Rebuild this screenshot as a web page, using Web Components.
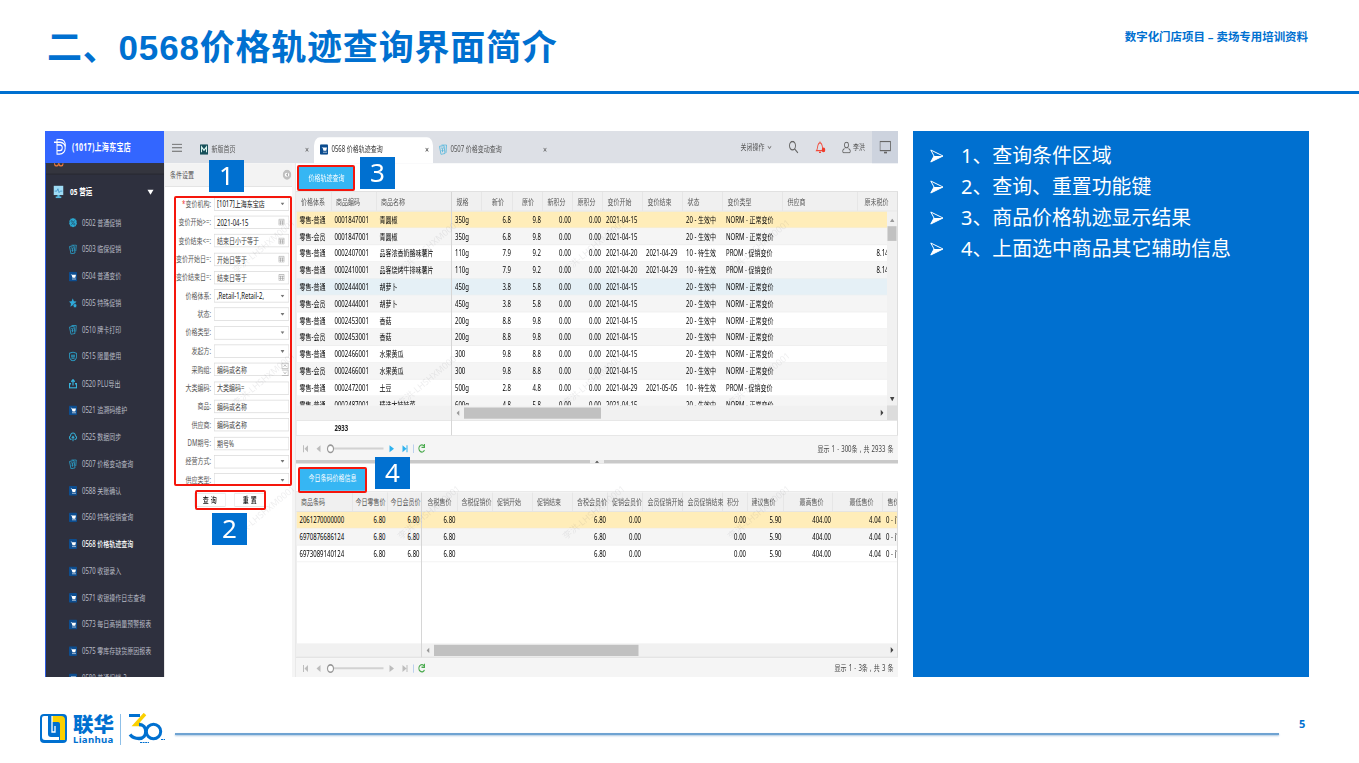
<!DOCTYPE html>
<html lang="zh-CN">
<head>
<meta charset="utf-8">
<title>0568价格轨迹查询界面简介</title>
<style>
body{margin:0;width:1359px;height:763px;overflow:hidden;background:#fff;font-family:"Noto Sans","Noto Sans CJK SC",sans-serif}
</style>
</head>
<body>
<slide-page>
  <slide-header slot="header">
    <span>二、0568价格轨迹查询界面简介</span>
    <span slot="note">数字化门店项目 – 卖场专用培训资料</span>
  </slide-header>
  <app-shot></app-shot>
  <note-list>
    <note-item>1、查询条件区域</note-item>
    <note-item>2、查询、重置功能键</note-item>
    <note-item>3、商品价格轨迹显示结果</note-item>
    <note-item>4、上面选中商品其它辅助信息</note-item>
  </note-list>
  <slide-footer slot="footer">5</slide-footer>
</slide-page>

<script>
const ICONS={
cart:`<rect width="16" height="16" rx="2" fill="#0d4d8f"/><path d="M3 4h2l1 1h8l-1.500 5H7L5 5" fill="#fff"/><circle cx="8" cy="12" r="1.200" fill="#fff"/><circle cx="12" cy="12" r="1.200" fill="#fff"/>`,
percent:`<path d="M8 0l2 1.400 2.500-.2.9 2.300L15.500 5 15 7.600l1 2.400-1.900 1.600-.7 2.400-2.500.2L8 16l-2.500-1.600-2.700-.2-.6-2.500L.2 10 1 7.600.5 5l2-1.500.9-2.300 2.600.2z" fill="#2ba7cf"/><path d="M11 4.500l-6 7" stroke="#20435c" stroke-width="1.300"/><circle cx="5.500" cy="5.800" r="1.400" fill="none" stroke="#20435c"/><circle cx="10.500" cy="10.300" r="1.400" fill="none" stroke="#20435c"/>`,
cards:`<g fill="none" stroke="#2b9cc4" stroke-width="1.600"><path d="M5 1h9.500l-1 10"/><path d="M1 3.500l9-1.500 2 12-8 1.500z"/><path d="M5 5l2 3 1.500-3.500M7 8v4M5 9.500h4"/></g>`,
star:`<path d="M7.500 0l2.200 4.800 5.300.5-4 3.600 1.200 5.100-4.700-2.600L2.800 14 4 8.900 0 5.300l5.200-.5z" fill="#2fa9d8"/><circle cx="12" cy="12" r="3.500" fill="#2fa9d8" stroke="#2e3040"/>`,
shield:`<g fill="none" stroke="#2b9cc4" stroke-width="1.700"><path d="M1 3l7-2 7 2v5c0 4-4 6.500-7 7.500C5 14.500 1 12 1 8z"/><path d="M4 6h8M4 8.500h8M5 11h6"/></g>`,
out:`<g fill="none" stroke="#38b4dc" stroke-width="2.300"><path d="M4 8H1v7h14V8h-3M8 11V2M4.500 5L8 1.500 11.500 5"/></g>`,
cloud:`<g fill="none" stroke="#35a9d0" stroke-width="2"><path d="M5 12H3.500C0 11 0 7 3 6.500 3.500 0 12.500 0 13 6.500c3 .5 3 4.500-.5 5.500H11M8 15V7M5.500 9.500L8 7l2.500 2.500"/></g>`,
monitor:`<rect width="18" height="12" fill="#9fdcf5"/><path d="M2 7h4l2-3 2 5 2-2h4" fill="none" stroke="#2b82bd"/><path d="M7 12h4v2h3v2H4v-2h3z" fill="#56b9df"/>`,
home:`<rect width="16" height="16" rx="1" fill="#17505a"/><path d="M3 12V4l5 5 5-5v8" fill="none" stroke="#d8f4ee" stroke-width="2"/>`,
cardsLight:`<g fill="none" stroke="#56b7dc" stroke-width="1.500"><path d="M5 1h10l-1 12"/><path d="M1 3l9-1 2 12-8 1.500z"/><path d="M5 5l2 3 1.500-3.500M7 8v4M5 9.500h4"/></g>`
};

class PlainIcon extends HTMLElement{
constructor(){
  super();
  this.attachShadow({mode:'open'});
}
connectedCallback(){
  const name=this.getAttribute('name');
  const box=name==='monitor'?'0 0 18 16':'0 0 16 16';
  this.shadowRoot.innerHTML=`
<style>
:host{display:block;width:16px;height:14px;flex:none}
svg{display:block;width:100%;height:100%}
</style>
<svg viewBox="${box}" preserveAspectRatio="none">${ICONS[name]}</svg>`;
}
}
customElements.define('plain-icon',PlainIcon);

class SlidePage extends HTMLElement{
constructor(){
  super();
  this.attachShadow({mode:'open'}).innerHTML=`
<style>
:host{display:flex;flex-direction:column;width:1359px;height:763px}
main{display:grid;grid-template-columns:853px 396px;column-gap:15px;height:546px;padding:37px 0 0 45px}
</style>
<slot name="header"></slot>
<main><slot></slot></main>
<slot name="footer"></slot>`;
}
}
customElements.define('slide-page',SlidePage);

class SlideHeader extends HTMLElement{
constructor(){
  super();
  this.attachShadow({mode:'open'}).innerHTML=`
<style>
:host{display:flex;justify-content:space-between;box-sizing:border-box;height:94px;border-bottom:3px solid #0070d0;color:#0070d0;font-weight:700;white-space:nowrap}
h1{margin:0;padding:21px 0 0 47px;font:700 35px/54px "Liberation Sans","Noto Sans CJK SC",sans-serif;letter-spacing:.8px}
p{margin:0;padding:28px 51px 0 0;font-size:11.450px;line-height:18px}
</style>
<h1><slot></slot></h1>
<p><slot name="note"></slot></p>`;
}
}
customElements.define('slide-header',SlideHeader);

class NoteList extends HTMLElement{
constructor(){
  super();
  this.attachShadow({mode:'open'}).innerHTML=`
<style>
:host{display:flex;flex-direction:column;box-sizing:border-box;padding:9px 0 0 17px;background:#0070d0;color:#fff}
</style>
<slot></slot>`;
}
}
customElements.define('note-list',NoteList);

class NoteItem extends HTMLElement{
constructor(){
  super();
  this.attachShadow({mode:'open'}).innerHTML=`
<style>
:host{display:flex;align-items:center;gap:17px;height:31px;font-size:19.900px;line-height:31px;white-space:nowrap}
svg{width:14px;height:14px;flex:none}
</style>
<svg viewBox="0 0 14 14"><path d="M.8 1L13 7 .8 13 4 7z" fill="none" stroke="#fff"/><path d="M4 7h9L.8 13z" fill="#fff"/></svg>
<span><slot></slot></span>`;
}
}
customElements.define('note-item',NoteItem);

class SlideFooter extends HTMLElement{
constructor(){
  super();
  this.attachShadow({mode:'open'}).innerHTML=`
<style>
:host{display:flex;align-items:flex-start;padding:36px 0 0 40px;color:#0070d0}
svg{display:block;flex:none}
.brand{display:flex;flex-direction:column;width:41px;margin-left:6px;white-space:nowrap}
.brand b{font:900 20.500px/21px "Noto Sans CJK SC",sans-serif}
.brand i{font:700 9.600px/11px "Noto Sans",sans-serif;letter-spacing:.3px}
.bar{width:1px;height:31px;margin:1px 7px 0 6px;background:#8fc0e8}
.line{width:1104px;height:2px;margin:20px 0 0 9px;background:#6fa3d2;box-shadow:0 1px 2px #aac6e0}
.page{margin-left:20px;font-size:11px;font-weight:700;line-height:20px;padding-top:1px}
</style>
<svg width="27" height="31" viewBox="0 0 27 31">
  <rect y="1" width="27" height="29" rx="4" fill="#0070d0"/>
  <path d="M2 5q0-2 2-2h4v18q0 3 3 3h8v3H5q-3 0-3-3z" fill="#fff"/>
  <path d="M12 3h9q4 0 4 4v20h-5V11q0-2-2-2h-6z" fill="#fbd000"/>
  <path d="M12 3v16h3v-6" fill="none" stroke="#fff" stroke-width="1.300"/>
</svg>
<div class="brand"><b>联华</b><i>Lianhua</i></div>
<div class="bar"></div>
<svg width="38" height="31" viewBox="0 0 38 31">
  <path d="M1 2.500h11" stroke="#0070d0" stroke-width="3"/>
  <path d="M17 1L7.500 11.500h6" fill="none" stroke="#fbd000" stroke-width="3.500"/>
  <path d="M11 11.500c9 0 9 14 0 14q-6 0-9-4" fill="none" stroke="#0070d0" stroke-width="3.300"/>
  <circle cx="25.500" cy="18.500" r="7.200" fill="none" stroke="#0070d0" stroke-width="3"/>
  <path d="M12 29.500h9M33 26.500h4" stroke="#0070d0" stroke-dasharray="2 .6"/>
</svg>
<div class="line"></div>
<div class="page"><slot></slot></div>`;
}
}
customElements.define('slide-footer',SlideFooter);

class MenuItem extends HTMLElement{
constructor(){
  super();
  this.attachShadow({mode:'open'});
}
connectedCallback(){
  this.shadowRoot.innerHTML=`
<style>
:host{display:flex;align-items:center;gap:10px;height:38.270px;padding-left:46px;color:#b9bcc6;font-size:12px;white-space:nowrap;flex:none}
:host([active]){color:#fff;font-weight:500}
</style>
<plain-icon name="${this.getAttribute('icon')}"></plain-icon>
<span><slot></slot></span>`;
}
}
customElements.define('menu-item',MenuItem);

class SideMenu extends HTMLElement{
constructor(){
  super();
  const items=[['percent','0502 普通促销'],['cards','0503 临保促销'],['cart','0504 普通变价'],['star','0505 特殊促销'],
    ['cards','0510 牌卡打印'],['shield','0515 限量使用'],['out','0520 PLU导出'],['cart','0521 追溯码维护'],['cloud','0525 数据同步'],
    ['cards','0507 价格变动查询'],['cart','0588 关账确认'],['cart','0560 特殊促销查询'],['cart','0568 价格轨迹查询'],['cart','0570 收银录入'],
    ['cart','0571 收银操作日志查询'],['cart','0573 每日高销量预警报表'],['cart','0575 零库存缺货原因报表'],['cart','0580 普通促销-2']];
  this.attachShadow({mode:'open'}).innerHTML=`
<style>
:host{display:flex;flex-direction:column;width:238px;height:780px;overflow:hidden;background:#2e303e}
header{display:flex;align-items:center;gap:11px;height:46px;padding-left:17px;background:#3366ff;color:#fff;font-size:14px;letter-spacing:.6px;font-weight:700;white-space:nowrap;flex:none}
header svg{width:26px;height:24px}
nav{display:flex;flex-direction:column;border-left:2px solid #2f5de0;flex:1;min-height:0}
.cut{height:15px;padding-left:16px;background:#34353e;border-bottom:1px solid #23242c;flex:none}
.cut svg{display:block;width:20px;height:5px}
.group{display:flex;align-items:center;height:50px;padding:0 21px 0 15px;color:#fff;font-size:13px;font-weight:700;flex:none}
.group plain-icon{width:20px;height:18px;margin-right:13px}
.group i{margin-left:auto;border:6px solid transparent;border-top:7px solid #fff;border-bottom:0}
</style>
<header>
  <svg viewBox="0 0 26 24" fill="none" stroke="#fff" stroke-width="2"><path d="M1 5h12c14 0 14 17-1 17H7V1h6c7 0 11 4 11 10"/><path d="M7 17h6c6 0 6-8 0-8H7"/></svg>
  <span>(1017)上海东宝店</span>
</header>
<nav>
  <div class="cut"><svg viewBox="0 0 20 5" fill="none" stroke="#e8783c" stroke-width="2"><circle cx="5" cy="0" r="4"/><circle cx="14" cy="0" r="4"/></svg></div>
  <div class="group"><plain-icon name="monitor"></plain-icon>05 营运<i></i></div>
  ${items.map(([icon,text],i)=>`<menu-item icon="${icon}"${i===12?' active':''}>${text}</menu-item>`).join('')}
</nav>`;
}
}
customElements.define('side-menu',SideMenu);

class TopBar extends HTMLElement{
constructor(){
  super();
  this.attachShadow({mode:'open'}).innerHTML=`
<style>
:host{display:flex;align-items:stretch;height:46px;background:#dde0e6;color:#555;font-size:12px;white-space:nowrap;flex:none}
svg{display:block;flex:none}
.burger{width:20px;height:12px;margin:18px 0 0 16px}
.tab{display:flex;align-items:center;box-sizing:border-box;padding:6px 12px 0 14px}
.tab span{margin-left:7px}
.tab em{margin-left:auto;font-style:normal;font-size:14px}
.home{width:244px;margin-left:22px}
.on{width:238px;margin:9px 0 0 -2px;padding:0 8px 3px 12px;background:#fff;border-radius:12px 12px 0 0;color:#333}
.tab plain-icon{height:15px}
.other{width:240px;padding-left:12px}
.tools{display:flex;align-items:center;margin-left:auto}
.tools .search{width:20px;height:18px;margin-left:34px}
.tools .bell{width:21px;height:19px;margin-left:34px}
.tools .user{width:18px;height:17px;margin:0 4px 0 32px}
.screen{display:flex;align-items:center;justify-content:center;width:52px;height:46px;margin-left:14px;background:#cdd3de}
.screen svg{width:23px;height:18px}
</style>
<svg class="burger" viewBox="0 0 20 12" stroke="#666" stroke-width="1.600"><path d="M0 1h20M0 6h20M0 11h20"/></svg>
<div class="tab home"><plain-icon name="home"></plain-icon><span>新版首页</span><em>×</em></div>
<div class="tab on"><plain-icon name="cart"></plain-icon><span>0568 价格轨迹查询</span><em>×</em></div>
<div class="tab other"><plain-icon name="cardsLight"></plain-icon><span>0507 价格变动查询</span><em>×</em></div>
<div class="tools">
  <span>关闭操作</span>
  <svg width="8" height="5" viewBox="0 0 8 5" style="margin-left:6px"><path d="M0 0l4 4 4-4" fill="none" stroke="#777" stroke-width="1.500"/></svg>
  <svg class="search" viewBox="0 0 20 18" fill="none" stroke="#666" stroke-width="1.900"><circle cx="8" cy="7" r="6"/><path d="M12 11.500l7 6"/></svg>
  <svg class="bell" viewBox="0 0 21 19" fill="none" stroke="#f04c3c" stroke-width="1.700"><path d="M2 14c3-2 1-11 7-11s4 9 7 11zM9 1v2M7 16.500h4"/><circle cx="16" cy="13" r="3.500" fill="#f03c2c" stroke="none"/></svg>
  <svg class="user" viewBox="0 0 18 17" fill="none" stroke="#666" stroke-width="1.600"><circle cx="9" cy="5" r="4"/><path d="M5 10c-5 2-4 5-2 6h12c2-1 3-4-2-6"/></svg>
  <span>李洪</span>
  <div class="screen"><svg viewBox="0 0 23 18" fill="none" stroke="#666" stroke-width="1.700"><rect x="1" y="1" width="21" height="13"/><path d="M9 17h6" stroke-width="3"/></svg></div>
</div>`;
}
}
customElements.define('top-bar',TopBar);

class FormField extends HTMLElement{
constructor(){
  super();
  this.attachShadow({mode:'open'});
}
connectedCallback(){
  const type=this.getAttribute('type');
  const marks={
    select:'<svg width="8" height="4" viewBox="0 0 8 4"><path d="M0 0h8L4 4z" fill="#777"/></svg>',
    date:'<svg width="12" height="10" viewBox="0 0 12 10" fill="none" stroke="#999"><path d="M.5 1h11v8.500H.5zM0 3.500h12M0 6.500h12M4 3v6M8 3v6"/></svg>',
    spin:'<svg class="spin" width="14" height="19" viewBox="0 0 14 19" fill="none" stroke="#999"><path d="M.5.5h13v8H.5zM.5 10.500h13v8H.5M4 6l3-3 3 3M4 13l3 3 3-3"/></svg>'
  };
  this.shadowRoot.innerHTML=`
<style>
:host{display:flex;align-items:center;height:26.300px;font-size:12px;white-space:nowrap;flex:none}
label{display:flex;justify-content:flex-end;width:92px;margin-right:6px;color:#555}
label i{color:#e33;font-style:normal}
div{display:flex;align-items:center;justify-content:space-between;box-sizing:border-box;width:150px;height:19px;padding:0 8px 0 5px;border:1px solid #d8d8d8;background:#fff;color:#444;line-height:17px}
.strong{color:#111}
.spin{margin-right:-8px}
</style>
<label>${this.hasAttribute('required')?'<i>*</i>':''}${this.getAttribute('label')}:</label>
<div class="${this.hasAttribute('strong')?'strong':''}"><slot></slot>${marks[type]||''}</div>`;
}
}
customElements.define('form-field',FormField);

class FilterPanel extends HTMLElement{
constructor(){
  super();
  this.attachShadow({mode:'open'}).innerHTML=`
<style>
:host{display:flex;flex-direction:column;box-sizing:border-box;width:256px;height:734px;background:#fff;border-left:2px solid #e8e8e8;font-size:12px}
header{display:flex;align-items:center;justify-content:space-between;box-sizing:border-box;height:34px;padding:0 1px 0 10px;background:#f3f3f3;border-bottom:1px solid #ddd;color:#555;flex:none}
.form{height:426px;padding-top:11px;box-sizing:border-box;overflow:hidden;flex:none}
.actions{display:flex;justify-content:center;gap:18px;margin:11px 0 0 6px}
.actions button{width:62px;height:20px;padding:0;border:1px solid #ddd;background:#fff;color:#111;font:500 12px/16px "Noto Sans CJK SC",sans-serif;letter-spacing:4px;text-indent:3px}
</style>
<header>条件设置<svg width="18" height="15" viewBox="0 0 18 15"><ellipse cx="9" cy="7.500" rx="6.500" ry="5" fill="#fff" stroke="#c0c0c0" stroke-width="4"/><path d="M11 4.500L7 7.500l4 3z" fill="#aaa"/></svg></header>
<div class="form">
  <form-field label="变价机构" type="select" required strong>[1017]上海东宝店</form-field>
  <form-field label="变价开始&gt;=" type="date" strong>2021-04-15</form-field>
  <form-field label="变价结束&lt;=" type="date">结束日小于等于</form-field>
  <form-field label="变价开始日=" type="date">开始日等于</form-field>
  <form-field label="变价结束日=" type="date">结束日等于</form-field>
  <form-field label="价格体系" type="select" strong>,Retail-1,Retail-2,</form-field>
  <form-field label="状态" type="select"><span></span></form-field>
  <form-field label="价格类型" type="select"><span></span></form-field>
  <form-field label="发起方" type="select"><span></span></form-field>
  <form-field label="采购组" type="spin">编码或名称</form-field>
  <form-field label="大类编码">大类编码=</form-field>
  <form-field label="商品">编码或名称</form-field>
  <form-field label="供应商">编码或名称</form-field>
  <form-field label="DM期号">期号%</form-field>
  <form-field label="经营方式" type="select"><span></span></form-field>
  <form-field label="供应类型" type="select"><span></span></form-field>
</div>
<div class="actions"><button>查询</button><button>重置</button></div>`;
}
}
customElements.define('filter-panel',FilterPanel);

class DataGrid extends HTMLElement{

constructor(){
  super();
  this._model=null;
  this.attachShadow({mode:'open'}).innerHTML=`
<style>
:host{display:flex;border-top:1px solid #d5d5d5;border-bottom:1px solid #d0d0d0;box-sizing:border-box;font-size:12px;white-space:nowrap;overflow:hidden;flex:none}
.part{display:flex;flex-direction:column;box-sizing:border-box;min-width:0}
.locked{border-right:2px solid #d6d6d6;border-left:1px solid #ddd;flex:none}
.rest{flex:1;border-right:2px solid #ddd}
.head,.row{display:grid;flex:none}
.head{height:28px;background:#f0f0f0;border-bottom:1px solid #ddd;color:#555;line-height:27px;box-sizing:border-box;overflow:hidden}
.head>div{padding-left:9px;border-right:1px solid #dcdcdc;box-sizing:border-box}
.view{display:flex;flex:none}
.rows{flex:1;min-width:0;overflow:hidden}
.row{height:24px;box-sizing:border-box;border-bottom:1px solid #ededed;line-height:23px;color:#000}
.row:nth-child(even){background:#f5f5f5}
.row.hover{background:#e5f0f6}
.row.selected{background:#ffedb9}
.row>div{padding:0 4px 0 6px;overflow:hidden}
.num{text-align:right}
.vbar{display:flex;flex-direction:column;align-items:center;width:20px;background:#f1f1f1;flex:none}
.vbar i{width:18px;height:21px;background:#c1c1c1;margin:6px 0 auto}
.hbar{display:flex;align-items:center;background:#f1f1f1;box-sizing:border-box;border-bottom:1px solid #e2e2e2;padding-left:9px;flex:none}
.hbar i{height:16px;background:#c1c1c1;margin:0 auto 0 9px}
.corner{width:20px;height:100%;margin-left:7px;background:#dcdcdc}
.foot{flex:1;padding-left:76px;font-weight:700;color:#222;line-height:20px}
svg{display:block;flex:none}
</style>
<div class="part locked"></div>
<div class="part rest"></div>`;
}

set model(model){
  this._model=model;
  this._render();
}

get model(){
  return this._model;
}

_render(){
  const m=this._model;
  const [locked,rest]=this.shadowRoot.querySelectorAll('.part');
  const split=m.locked;
  locked.style.width=`${m.cols.slice(0,split).reduce((sum,col)=>sum+col.w,2)}px`;
  const foot=m.total?`<div class="foot">${m.total}</div>`:'';
  locked.innerHTML=this._part(0,split)+`<div class="hbar" style="height:${m.barHeight}px"></div>`+foot;
  rest.innerHTML=this._part(split,m.cols.length)+`
<div class="hbar" style="height:${m.barHeight}px">
  <svg width="6" height="8" viewBox="0 0 6 8"><path d="M6 0v8L0 4z" fill="#999"/></svg>
  <i style="width:${m.thumb}px"></i>
  <svg width="6" height="9" viewBox="0 0 6 9"><path d="M0 0v9l6-4.500z" fill="#444"/></svg>
  <div class="corner" style="${m.vertical?'':'width:0'}"></div>
</div>`+(m.total?'<div class="foot"></div>':'');
}

_part(from,to){
  const m=this._model;
  const cols=m.cols.slice(from,to);
  const tpl=`grid-template-columns:${cols.map(col=>`${col.w}px`).join(' ')}`;
  const head=cols.map(col=>`<div${col.num?` class="num" style="padding:0 ${col.hp===undefined?17:col.hp}px 0 0"`:''}>${col.t}</div>`).join('');
  const rows=m.rows.map((row,i)=>{
    const cls=i===0?'row selected':i===m.hover?'row hover':'row';
    const cells=cols.map((col,j)=>`<div${col.num?' class="num"':''}${col.cp?` style="padding-right:${col.cp}px"`:''}>${row[from+j]}</div>`).join('');
    return `<div class="${cls}" style="${tpl}">${cells}</div>`;
  }).join('');
  const vbar=m.vertical&&from>0?`
<div class="vbar">
  <svg width="9" height="5" viewBox="0 0 9 5" style="margin-top:10px"><path d="M0 5h9L4.500 0z" fill="#999"/></svg>
  <i></i>
  <svg width="9" height="6" viewBox="0 0 9 6" style="margin-bottom:6px"><path d="M0 0h9L4.500 6z" fill="#444"/></svg>
</div>`:'';
  return `<div class="head" style="${tpl}">${head}</div>
<div class="view" style="height:${m.bodyHeight}px"><div class="rows">${rows}</div>${vbar}</div>`;
}

}
customElements.define('data-grid',DataGrid);

class PagerBar extends HTMLElement{
constructor(){
  super();
  this.attachShadow({mode:'open'});
}
connectedCallback(){
  const next=this.hasAttribute('next')?'#2eb2ee':'#bdbdbd';
  this.shadowRoot.innerHTML=`
<style>
:host{display:flex;align-items:center;justify-content:space-between;box-sizing:border-box;padding:1px 9px 0 13px;background:#f5f5f5;color:#444;font-size:12px;word-spacing:1.200px;white-space:nowrap;flex:none}
</style>
<svg width="250" height="18" viewBox="0 0 250 18">
  <path d="M1 4h2v10H1zM11 4v10L4 9zM36 4v10l-8-5z" fill="#bdbdbd"/>
  <path d="M60 8.500h102" stroke="#d2d2d2" stroke-width="3"/>
  <ellipse cx="56" cy="9" rx="6" ry="5.300" fill="#fff" stroke="#999" stroke-width="2.300"/>
  <path d="M174 4v10l9-5zM200 4v10l8-5zM208 4h2v10h-2z" fill="${next}"/>
  <path d="M222 3v12" stroke="#bcd0ee" stroke-width="2"/>
  <path d="M243 5a6 5 0 1 0 1 6M244 2v5h-6" fill="none" stroke="#4cab50" stroke-width="2"/>
</svg>
<slot></slot>`;
}
}
customElements.define('pager-bar',PagerBar);

const number=(t,w,hp,cp)=>({t,w,num:true,hp,cp});
const price=(level,code,name,spec,now,old,start,end,promo,net)=>[level,code,name,spec,now,old,'0.00','0.00',start,end,
  promo?'10 - 待生效':'20 - 生效中',promo?'PROM - 促销变价':'NORM - 正常变价','',net||''];
const day='2021-04-15';

const history={
  locked:3,bodyHeight:277,barHeight:22,thumb:274,hover:4,vertical:true,total:'2933',
  cols:[{t:'价格体系',w:70},{t:'商品编码',w:90},{t:'商品名称',w:150},{t:'规格',w:60},number('新价',62),number('原价',60),
    number('新积分',60,14),number('原积分',60,14),{t:'变价开始',w:80},{t:'变价结束',w:80},{t:'状态',w:80},{t:'变价类型',w:120},
    {t:'供应商',w:150},number('原未税价',80,18,19)],
  rows:[
    price('零售-普通','0001847001','青圆椒','350g','6.8','9.8',day,''),
    price('零售-会员','0001847001','青圆椒','350g','6.8','9.8',day,''),
    price('零售-普通','0002407001','品客浓香奶酪味薯片','110g','7.9','9.2','2021-04-20','2021-04-29',true,'8.14'),
    price('零售-普通','0002410001','品客烧烤牛排味薯片','110g','7.9','9.2','2021-04-20','2021-04-29',true,'8.14'),
    price('零售-普通','0002444001','胡萝卜','450g','3.8','5.8',day,''),
    price('零售-会员','0002444001','胡萝卜','450g','3.8','5.8',day,''),
    price('零售-普通','0002453001','香菇','200g','8.8','9.8',day,''),
    price('零售-会员','0002453001','香菇','200g','8.8','9.8',day,''),
    price('零售-普通','0002466001','水果黄瓜','300','9.8','8.8',day,''),
    price('零售-会员','0002466001','水果黄瓜','300','9.8','8.8',day,''),
    price('零售-普通','0002472001','土豆','500g','2.8','4.8','2021-04-29','2021-05-05',true),
    price('零售-普通','0002487001','精选大娃娃菜','600g','4.8','5.8',day,'')
  ]
};

const today={
  locked:3,bodyHeight:188,barHeight:20,thumb:409,hover:-1,vertical:false,
  cols:[{t:'商品条码',w:112},number('今日零售价',70,3),number('今日会员价',68,1),number('含税售价',71,11),number('含税促销价',70,1),
    {t:'促销开始',w:80},{t:'促销结束',w:80},number('含税会员价',71,1),number('促销会员价',70,1),{t:'会员促销开始',w:80},{t:'会员促销结束',w:80},
    number('积分',50,17),number('建议售价',71,15),number('最高售价',99,18),number('最低售价',100,18),{t:'售价',w:50}],
  rows:['2061270000000','6970876686124','6973089140124'].map(code=>
    [code,'6.80','6.80','6.80','','','','6.80','0.00','','','0.00','5.90','404.00','4.04','0 - 门'])
};

class WaterMark extends HTMLElement{
constructor(){
  super();
  const xs=[238,403,568,733],ys=[276,409,542];
  this.attachShadow({mode:'open'}).innerHTML=`
<style>
:host{position:absolute;inset:0;overflow:hidden;pointer-events:none;color:rgba(90,90,100,.1);font-size:9px;line-height:12px}
span{position:absolute;white-space:nowrap;transform:rotate(-40deg);transform-origin:0 100%}
</style>
${ys.map(y=>xs.map(x=>`<span style="left:${x-45}px;top:${y-143}px">李洪-LHSHXM0001</span>`).join('')).join('')}`;
}
}
customElements.define('water-mark',WaterMark);

class CallOut extends HTMLElement{
constructor(){
  super();
  this.attachShadow({mode:'open'}).innerHTML=`
<style>
:host{position:absolute;box-sizing:border-box}
:host([kind=badge]){width:35px;height:32px;background:#0070d0;color:#fff;font-size:26px;line-height:31px;text-align:center}
:host([kind=frame]){border:2px solid #f5160c;border-radius:2px}
</style>
<slot></slot>`;
}
}
customElements.define('call-out',CallOut);

class AppShot extends HTMLElement{
constructor(){
  super();
  // the desk is laid out at 1706x780 and squeezed into the slide
  this.attachShadow({mode:'open'}).innerHTML=`
<style>
:host{display:block;position:relative;width:853px;height:546px;overflow:hidden}
.desk{display:flex;width:1706px;height:780px;transform:scale(.5,.7);transform-origin:0 0;line-height:16px}
.work{display:flex;flex-direction:column;flex:1;min-width:0}
.body{display:flex;flex:1;min-height:0}
.gap{width:8px;background:#f5f5f5;border-right:1px solid #ddd;box-sizing:border-box;flex:none}
.right{display:flex;flex-direction:column;flex:1;min-width:0}
.bar{display:flex;box-sizing:border-box;height:40px;padding:5px 0 0 6px;flex:none}
.bar b{box-sizing:border-box;height:33px;background:#36b6f3;color:#fff;font-size:12px;font-weight:400;line-height:33px;text-align:center;width:110px}
.bar.low{padding-top:6px}
.bar.low b{width:134px;line-height:30px}
.split{display:flex;justify-content:center;height:5px;background:#c9c9c9;flex:none}
.split svg{background:#ededed}
#history{height:350px}
#today{height:238px}
</style>
<div class="desk">
  <side-menu></side-menu>
  <div class="work">
    <top-bar></top-bar>
    <div class="body">
      <filter-panel></filter-panel>
      <div class="gap"></div>
      <div class="right">
        <div class="bar"><b>价格轨迹查询</b></div>
        <data-grid id="history"></data-grid>
        <pager-bar next style="height:34px">显示 1 - 300条 , 共 2933 条</pager-bar>
        <div class="split"><svg width="28" height="5" viewBox="0 0 28 5"><path d="M10 4h8l-4-3z" fill="#444"/></svg></div>
        <div class="bar low"><b>今日条码价格信息</b></div>
        <data-grid id="today"></data-grid>
        <pager-bar style="height:29px">显示 1 - 3条 , 共 3 条</pager-bar>
      </div>
    </div>
  </div>
</div>
<water-mark></water-mark>
<call-out kind="frame" style="left:129px;top:65px;width:118px;height:290px"></call-out>
<call-out kind="frame" style="left:150px;top:359px;width:71px;height:20px"></call-out>
<call-out kind="frame" style="left:252px;top:34px;width:58px;height:26px"></call-out>
<call-out kind="frame" style="left:253px;top:336px;width:69px;height:26px"></call-out>
<call-out kind="badge" style="left:164px;top:29px">1</call-out>
<call-out kind="badge" style="left:167px;top:382px">2</call-out>
<call-out kind="badge" style="left:315px;top:26px">3</call-out>
<call-out kind="badge" style="left:330px;top:326px">4</call-out>`;
  this.shadowRoot.querySelector('#history').model=history;
  this.shadowRoot.querySelector('#today').model=today;
}
}
customElements.define('app-shot',AppShot);
</script>
</body>
</html>
